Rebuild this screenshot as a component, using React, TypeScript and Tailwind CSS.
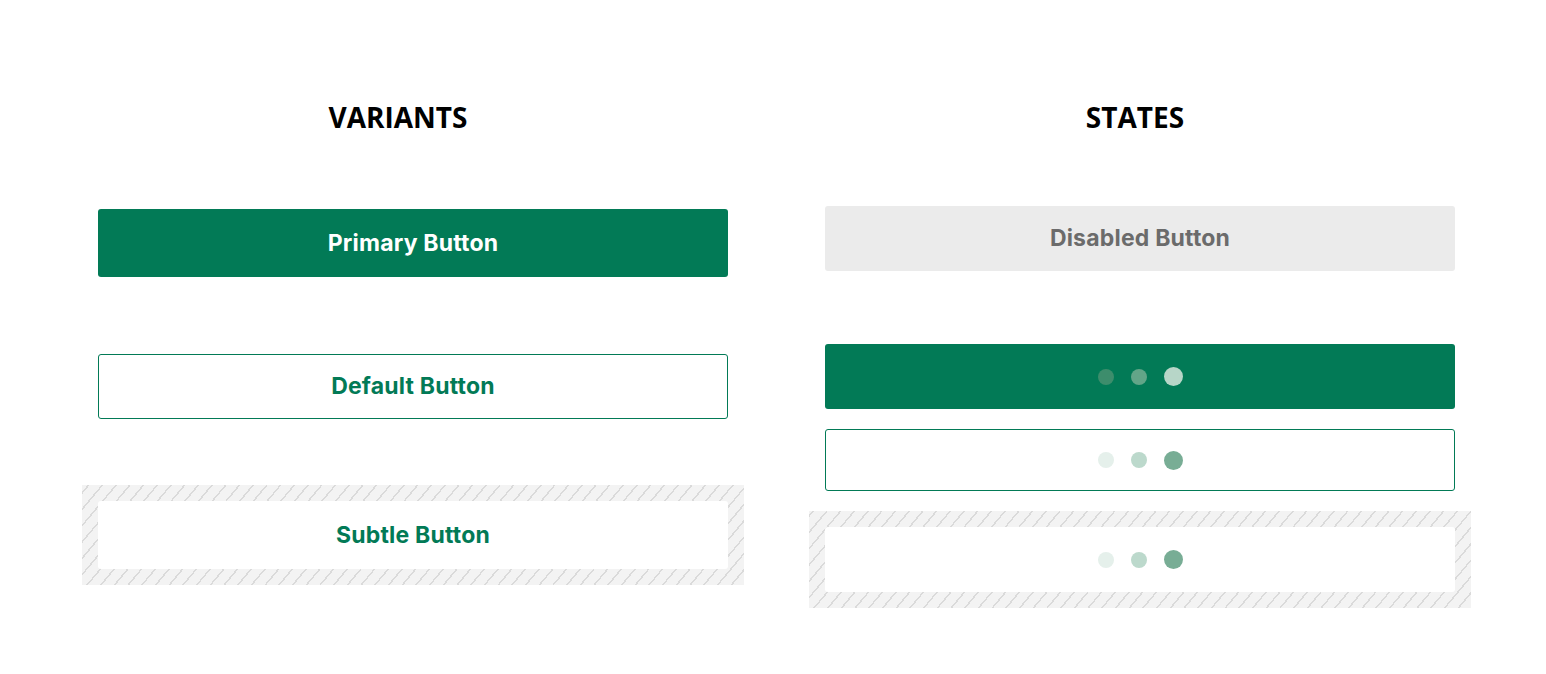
import React from "react";

const hatch =
  "bg-[repeating-linear-gradient(-50deg,#f3f3f3_0px,#f3f3f3_9px,#dadada_9px,#dadada_10.5px)]";

const btnText = "font-['Inter','Liberation_Sans',sans-serif] font-bold text-[23px] tracking-[0.2px]";

function Dots({ colors }: { colors: string[] }) {
  return (
    <div className="flex items-center gap-[17px]">
      <span className={`block w-[16px] h-[16px] rounded-full ${colors[0]}`} />
      <span className={`block w-[16px] h-[16px] rounded-full ${colors[1]}`} />
      <span className={`block w-[19px] h-[19px] rounded-full ${colors[2]}`} />
    </div>
  );
}

export default function App() {
  return (
    <div className="w-[1546px] h-[674px] bg-white relative overflow-hidden">
      <div className="flex pl-[82px] gap-[65px]">
        {/* Variants */}
        <div className="w-[662px] flex flex-col">
          <h2 className="mt-[99px] h-[36px] leading-[36px] text-center pr-[30px] font-['Open_Sans',sans-serif] font-bold text-[28px] text-black">
            VARIANTS
          </h2>
          <div className="px-[16px]">
            <div className={`mt-[74px] h-[68px] rounded-[3px] bg-[#027a56] flex items-center justify-center text-white ${btnText}`}>
              Primary Button
            </div>
            <div className={`mt-[77px] h-[65px] rounded-[3px] border-[1.5px] border-[#027a56] bg-white flex items-center justify-center text-[#027a56] ${btnText}`}>
              Default Button
            </div>
          </div>
          <div className={`mt-[66px] h-[100px] p-[16px] ${hatch}`}>
            <div className={`h-[68px] rounded-[3px] bg-white flex items-center justify-center text-[#027a56] ${btnText}`}>
              Subtle Button
            </div>
          </div>
        </div>

        {/* States */}
        <div className="w-[662px] flex flex-col">
          <h2 className="mt-[99px] h-[36px] leading-[36px] text-center pr-[10px] font-['Open_Sans',sans-serif] font-bold text-[28px] text-black">
            STATES
          </h2>
          <div className="px-[16px]">
            <div className={`mt-[71px] h-[65px] rounded-[3px] bg-[#ebebeb] flex items-center justify-center text-[#6b6b6b] ${btnText}`}>
              Disabled Button
            </div>
            <div className="mt-[73px] h-[65px] rounded-[3px] bg-[#027a56] flex items-center justify-center">
              <Dots colors={["bg-[#3d8d6c]", "bg-[#62a588]", "bg-[#b7d6c8]"]} />
            </div>
            <div className="mt-[20px] h-[62px] rounded-[3px] border-[1.5px] border-[#027a56] bg-white flex items-center justify-center">
              <Dots colors={["bg-[#e5f0eb]", "bg-[#bcd9cc]", "bg-[#78ad95]"]} />
            </div>
          </div>
          <div className={`mt-[20px] h-[97px] p-[16px] ${hatch}`}>
            <div className="h-[65px] rounded-[3px] bg-white flex items-center justify-center">
              <Dots colors={["bg-[#e5f0eb]", "bg-[#bcd9cc]", "bg-[#78ad95]"]} />
            </div>
          </div>
        </div>
      </div>
    </div>
  );
}
